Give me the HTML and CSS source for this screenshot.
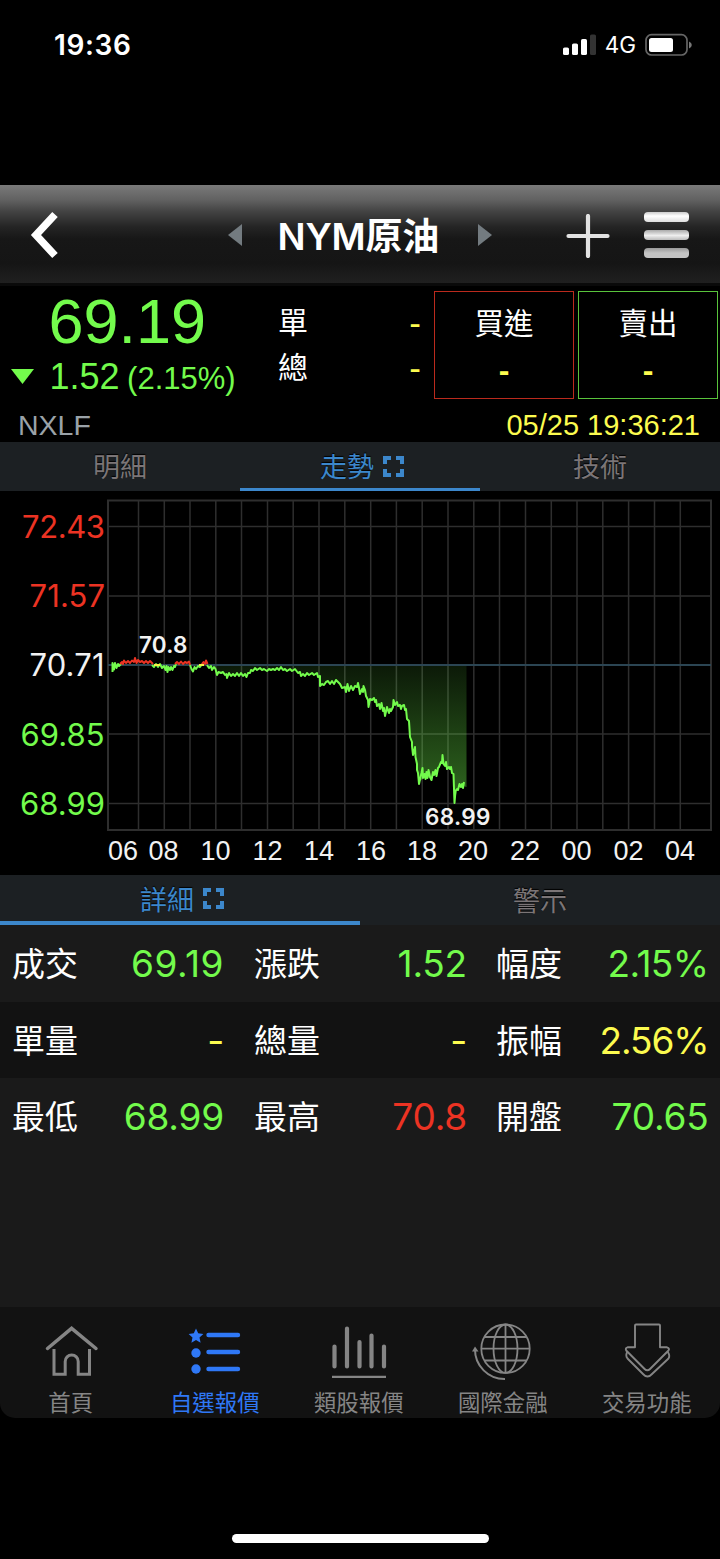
FILE: index.html
```html
<!DOCTYPE html>
<html lang="zh-Hant">
<head>
<meta charset="utf-8">
<title>NYM原油</title>
<link rel="stylesheet" href="styles.css">
</head>
<body>
<div class="status">
  <span class="time">19:36</span>
  <div class="signals">
    <svg width="33" height="22" viewBox="0 0 33 22"><g fill="#fff"><rect x="0" y="13.5" width="6" height="7.5" rx="1.6"/><rect x="9" y="9.5" width="6" height="11.5" rx="1.6"/><rect x="18" y="5" width="6" height="16" rx="1.6"/></g><rect x="27" y="0.5" width="6" height="20.500" rx="1.600" fill="#333"/></svg>
    <span class="net">4G</span>
    <svg width="48" height="24" viewBox="0 0 48 24"><rect x="1" y="1.700" width="41" height="20.300" rx="5.500" fill="none" stroke="#666" stroke-width="1.700"/><rect x="4" y="5" width="24" height="14" rx="2.500" fill="#fff"/><path d="M44 8.500q2.800 1 2.800 3.500t-2.800 3.500z" fill="#777"/></svg>
  </div>
</div>
<header class="header">
  <svg class="back" width="30" height="50" viewBox="0 0 30 50"><path d="M26 4.500 7 25l19 20.500" fill="none" stroke="#fff" stroke-width="7.500"/></svg>
  <div class="title">
    <svg width="14" height="22" viewBox="0 0 14 22"><path d="M14 0v22L0 11z" fill="#737b80"/></svg>
    <h1>NYM原油</h1>
    <svg width="14" height="22" viewBox="0 0 14 22"><path d="M0 0v22l14-11z" fill="#737b80"/></svg>
  </div>
  <svg class="add" width="44" height="44" viewBox="0 0 44 44"><path d="M22 2v40M2.500 22h39" stroke="#e2e2e2" stroke-width="4.200" stroke-linecap="round"/></svg>
  <div class="menu"><i></i><i></i><i></i></div>
</header>
<section class="quote">
  <div class="last">
    <div class="price">69.19</div>
    <div class="change"><svg width="23" height="15" viewBox="0 0 23 15"><path d="M0 0h23L11.500 15z" fill="#73fb4c"/></svg><span class="diff">1.52</span><span class="pct">(2.15%)</span></div>
  </div>
  <dl class="volume">
    <dt>單</dt><dd>-</dd>
    <dt>總</dt><dd>-</dd>
  </dl>
  <div class="side buy"><span>買進</span><b>-</b></div>
  <div class="side sell"><span>賣出</span><b>-</b></div>
  <div class="stamp"><span class="code">NXLF</span><span class="date">05/25 19:36:21</span></div>
</section>
<nav class="tabs three">
  <div class="tab">明細</div>
  <div class="tab on">走勢<svg width="21" height="21" viewBox="0 0 21 21"><path d="M8 2H2v6M13 2h6v6M19 13v6h-6M8 19H2v-6" fill="none" stroke="#3c87cb" stroke-width="4"/></svg></div>
  <div class="tab">技術</div>
</nav>
<svg class="chart" width="720" height="384" viewBox="0 491 720 384">
  <defs>
    <linearGradient id="fall" gradientUnits="userSpaceOnUse" x1="0" y1="665" x2="0" y2="803"><stop offset="0" stop-color="#73fb4c" stop-opacity=".1"/><stop offset="1" stop-color="#73fb4c" stop-opacity=".42"/></linearGradient>
  </defs>
  <g fill="none" stroke="#2e2e2e" stroke-width="1.500">
    <path stroke-width="2" d="M108 500.500H711V830H108z"/>
    <path d="M108 526.500H711M108 596H711M108 734H711M108 803.500H711"/>
    <path d="M138.500 501V830M164.300 501V830M190 501V830M215.800 501V830M241.500 501V830M267.500 501V830M293.200 501V830M319 501V830M344.800 501V830M370.700 501V830M396.400 501V830M422.200 501V830M448 501V830M473.800 501V830M499.500 501V830M525.500 501V830M551.300 501V830M577 501V830M602.800 501V830M628.600 501V830M654.500 501V830M680.300 501V830"/>
  </g>
  <path fill="url(#fall)" d="M208 665L216 671 227 676 247 675 254 669 280 668 295 670 300 674 317 674 320 685 337 680 341 687 346 690 358 686 361 692 364 691 368 703 375 699 385 714 392 710 394 703 404 706 408 720 412 745 415 752 419 782 425 777 431 778 439 766 443 762 447 767 451 768 453 774 454 803 457 791 460 785 466.500 787V665z"/>
  <path d="M108 665H711" stroke="#2b4553" stroke-width="2"/>
  <g fill="none" stroke-width="2" stroke-linejoin="round">
    <g stroke="#73fb4c">
      <path d="M112.500 672V663L114 669.500 115 663 116.500 668 118 664 119 666 121 664"/>
      <path d="M152 665L154 667 156 664 158 667 160 664 162 668 164 666 165.500 670 166.500 666 167.500 672 168.500 667 170 670 171 667 172.500 670 174 666 175 667 176 664"/>
      <path d="M190 665L191.500 669 193 671.500 194.500 667 196 669 198 666 200 667 202 664"/>
      <path d="M207 665L209 668 211 666 212 670 214 667 215.500 669 217 675 218.500 672 221 673 223 672 225 675 226.500 674 227 678 229 673 231 676 233 674 235 676 237 673 239 676 241 673 243 676 245 674 246.500 677 248 673 250 673 251 670 253 671 255 668 257 670 260 668 262 670 264 669 267 671 269 669 271 670 273 669 275 670 277 668 279 670 281 667 283 670 285 669 287 671 290 669 292 671 295 669 298 673 300 672 301 676 303 674 305 676 307 673 309 675 312 673 314 675 317 673 318 677 320 676 320 686 322 684 324 685 326 682 328 681 330 684 332 681 334 684 336 680 338 682 340 684 342 688 345 687 346 692 347.500 684 349 691 351 686 353 690 355 686 357 687 358 683 359 688 360 694 362 689 363 692 363.500 686 365 690 366 696 368 700 368.500 707 370 699 372 700 374 698 375 702 376 700 377 706 379 704 380 709 381.500 703 383 711 384 708 385 716 387 707 389 713 390 709 391 711 393 707 393.500 700 395 705 397 702 398 706 400 705 401 709 402 706 404 705 405 710 406 709 407 719 409 721 410 737 412 742 412 746 413 755 415 747 415.500 757 417 764 417 770 418 773 419 784 420.500 777 421.500 773 422.500 768 423 778 424.500 774 425.500 779 426.500 772 427.500 778 428.500 770 430 777 431.500 780 433 772 434 775 435.500 770 436.500 776 438 768 439 767 441 762 442 763 442.500 755 443.500 764 445 766 446 762 447 769 449 767 450 769 451 767 452 773 453.500 774 454.500 803 455.500 791 457 789 458 790 459.500 784 461 787 462 784 463 788 464 782"/>
    </g>
    <g stroke="#ec3323">
      <path d="M120 664L122 662 123 664 124 660.500 126 663 128 661 130 663 132 660.500 134 662 135 658 136.500 663 138 660 140 662 142 661 144 663 146 661 148 663 150 661 153 664"/>
      <path d="M175 664L177 662 179 664 181 661.500 183 664 185 662 187 663 189 661.500 190 665"/>
      <path d="M202 664L203.500 662 205 664 206 660.500 207.500 664"/>
    </g>
    <path stroke="#f6ef45" d="M154 665H160M199 665H204"/>
  </g>
  <g class="ylab">
    <text x="22" y="538" textLength="83" class="up">72.43</text>
    <text x="29.500" y="607" textLength="75.500" class="up">71.57</text>
    <text x="29.500" y="676" textLength="75">70.71</text>
    <text x="20.500" y="745.500" textLength="84" class="down">69.85</text>
    <text x="20" y="814.500" textLength="85" class="down">68.99</text>
  </g>
  <g class="mark"><text x="139" y="652.500" textLength="48.500">70.8</text><text x="425" y="825" textLength="65.500">68.99</text></g>
  <g class="xlab"><text x="123" y="860">06</text><text x="163.500" y="860">08</text><text x="215.500" y="860">10</text><text x="267.500" y="860">12</text><text x="319" y="860">14</text><text x="371" y="860">16</text><text x="422" y="860">18</text><text x="473" y="860">20</text><text x="525" y="860">22</text><text x="576.500" y="860">00</text><text x="628.500" y="860">02</text><text x="680" y="860">04</text></g>
</svg>
<nav class="tabs two">
  <div class="tab on">詳細<svg width="21" height="21" viewBox="0 0 21 21"><path d="M8 2H2v6M13 2h6v6M19 13v6h-6M8 19H2v-6" fill="none" stroke="#3c87cb" stroke-width="4"/></svg></div>
  <div class="tab">警示</div>
</nav>
<main class="detail">
  <div class="row"><label>成交</label><span class="down deal">69.19</span><label>漲跌</label><span class="down">1.52</span><label>幅度</label><span class="down rate">2.15%</span></div>
  <div class="row"><label>單量</label><span class="flat">-</span><label>總量</label><span class="flat">-</span><label>振幅</label><span class="flat range">2.56%</span></div>
  <div class="row"><label>最低</label><span class="down">68.99</span><label>最高</label><span class="up">70.8</span><label>開盤</label><span class="down">70.65</span></div>
</main>
<footer class="dock">
  <div class="item"><svg width="64" height="64" viewBox="0 0 64 64"><path stroke-width="3.500" stroke-linecap="round" d="M7.500 28.500 31.600 8.300 56 28.500"/><path stroke-width="3" d="M14 29v25.200h11.200V41.500a6.500 6.500 0 0 1 13 0v12.700h11.300V29"/></svg><span>首頁</span></div>
  <div class="item on"><svg width="64" height="64" viewBox="0 0 64 64"><path fill="#2f78f6" stroke="none" d="M12 8.500l2.200 4.800 5.200.6-3.900 3.500 1.100 5.300-4.600-2.700-4.600 2.700 1.100-5.300-3.900-3.500 5.200-.6z"/><circle cx="12" cy="33" r="4.700" fill="#2f78f6" stroke="none"/><circle cx="12" cy="49" r="4.700" fill="#2f78f6" stroke="none"/><path stroke-width="4.400" stroke-linecap="round" d="M24.500 15H54M24.500 32H54M24.500 49H54"/></svg><span>自選報價</span></div>
  <div class="item"><svg width="64" height="64" viewBox="0 0 64 64"><path stroke-width="4.200" stroke-linecap="round" d="M6.500 26.500V46.500M19 8.500V46.500M31.500 22V46.500M43.500 15.500V46.500M56 26.500V46.500"/><path stroke-width="2.200" d="M4 56.800H58"/></svg><span>類股報價</span></div>
  <div class="item"><svg width="64" height="64" viewBox="0 0 64 64"><g stroke-width="1.800"><circle cx="33.500" cy="28.700" r="24.200"/><ellipse cx="33.500" cy="28.700" rx="12" ry="24.200"/><path d="M33.500 4.500V53M9.300 28.700H57.700M13 17H54M13 40.500H54"/></g><path stroke-width="2" d="M3 29a29.500 29.500 0 0 0 30 30"/><path fill="#858585" stroke="none" d="M0 31.500 3 26.500 6.500 31.500z"/></svg><span>國際金融</span></div>
  <div class="item"><svg width="64" height="64" viewBox="0 0 64 64"><g stroke-width="1.900" stroke-linejoin="round"><path d="M19 5.500q0-1 1-1H43q1 0 1 1V27.300h7q3 1 1.500 3.200L34 49q-2.700 2.700-5.400 0L10.200 30.500Q9 28 11.500 27.300H19z"/><path d="M11.500 31.500q-2.500 4 0 7L27 54q4.500 5 9 0L52.500 38.500q2-3-1-7"/></g></svg><span>交易功能</span></div>
</footer>
<div class="home"></div>
</body>
</html>
```
FILE: styles.css
```css
* { box-sizing: border-box; }
body { margin: 0; width: 720px; height: 1559px; background: #000; color: #fff; font-family: Inter, "Noto Sans CJK TC", sans-serif; overflow: hidden; }
svg { display: block; flex: none; }
.up { color: #ec3323; fill: #ec3323; }
.down { color: #73fb4c; fill: #73fb4c; }
.flat { color: #fcfb4f; }

.status { height: 185px; padding: 31px 27px 0 54px; display: flex; justify-content: space-between; align-items: flex-start; }
.time { font-size: 28px; line-height: 28px; font-weight: 600; letter-spacing: .6px; }
.signals { display: flex; align-items: center; height: 28px; }
.net { font-size: 22.5px; line-height: 28px; margin: 0 9px 0 9px; }

.header { height: 101px; border-bottom: 3px solid #0a0a0a; padding: 0 31px 0 29px; display: flex; align-items: center; background: linear-gradient(#7a7a7a 0, #616161 15px, #444 26px, #242424 42px, #171717 54px, #151515 78px, #202020 98px); }
.back { margin-top: 2px; }
.title { flex: 1; display: flex; justify-content: center; align-items: center; gap: 36px; padding-left: 166px; }
.title svg { margin-top: 2px; }
h1 { margin: 6px 0 0; width: 164px; white-space: nowrap; font-size: 37px; line-height: 50px; font-weight: 600; letter-spacing: -.2px; }
.add { margin: 3px 34px 0 72px; }
.menu { display: grid; gap: 8px; margin-top: 2px; }
.menu i { width: 45px; height: 10px; border-radius: 4px; background: linear-gradient(#aaa, #eee 55%, #bbb); }
.menu i:first-child { background: linear-gradient(#ccc, #fff 40%, #ddd); }
.menu i:last-child { background: linear-gradient(#999, #c4c4c4 50%, #c4c4c4); }

.quote { height: 156px; padding-top: 5px; display: grid; grid-template-columns: 278px 143px 13px 140px 4px 140px; grid-template-rows: 108px 43px; font-family: "Liberation Sans", "Noto Sans CJK TC", sans-serif; }
.last { color: #73fb4c; }
.price { font-size: 63px; line-height: 60px; padding-left: 48.5px; }
.change { display: flex; align-items: baseline; padding-left: 11px; line-height: 52px; }
.change svg { margin-right: 15.5px; position: relative; top: -5px; }
.diff { font-size: 36px; }
.pct { font-size: 31px; margin-left: 7.5px; }
.volume { margin: 9px 0 0; display: grid; grid-template-columns: 1fr auto; grid-auto-rows: 45px; line-height: 45px; font-size: 30px; }
.volume dd { margin: 0; color: #fcfb4f; font-size: 35px; }
.side { display: grid; grid-template-rows: 46px 46px; padding-top: 9px; text-align: center; line-height: 46px; font-size: 29.500px; }
.side b { color: #fcfb4f; font-size: 32px; }
.buy { grid-column: 4; border: 1px solid #bb2a1d; }
.sell { grid-column: 6; border: 1px solid #59c43c; }
.stamp { grid-column: 1 / -1; display: flex; justify-content: space-between; padding: 5px 18px 0 18px; line-height: 43px; }
.code { font-size: 28.5px; color: #9aa2a8; }
.date { font-size: 29px; color: #fcfb4f; }

.tabs { display: grid; background: #1c2023; color: #7b7577; font-size: 27px; line-height: 41px; text-shadow: 0 -1.500px 1px #000; }
.three { grid-template-columns: repeat(3, 1fr); height: 49px; }
.two { grid-template-columns: repeat(2, 1fr); height: 50px; }
.tab { display: flex; justify-content: center; align-items: center; gap: 9px; padding: 5px 0 3px; }
.on { color: #3c87cb; }
.tab.on { padding: 5px 0 0 4px; border-bottom: 3px solid #3c87cb; }
.two .tab.on { padding-top: 4px; border-bottom-width: 4px; }
.tab svg { margin-top: -3px; }

.ylab { font-size: 31px; fill: #f2f2f2; }
.mark { font-size: 22.500px; font-weight: 600; fill: #f2f2f2; }
.xlab { font-family: "Liberation Sans", sans-serif; font-size: 27px; fill: #f2f2f2; text-anchor: middle; }

.detail { height: 382px; background: #1a1a1a; }
.row { display: grid; grid-template-columns: 76px 136px 106px 137px 105px 136.5px; height: 76.500px; align-items: center; padding-left: 12px; }
.row:nth-child(2) { background: #121212; }
.row label { font-size: 33px; line-height: 76px; padding-top: 1px; }
.row span { font-size: 37px; line-height: 76px; padding-top: 1px; text-align: right; letter-spacing: -.2px; }
.row .deal { letter-spacing: .5px; }
.row .rate { letter-spacing: -.6px; }
.row .range { letter-spacing: -1.1px; }
.row label:nth-of-type(n+2) { padding-left: 30px; }
.row label:nth-of-type(3) { padding-left: 29px; }

.dock { height: 111px; background: #121212; border-radius: 0 0 15px 15px; display: grid; grid-template-columns: repeat(5, 1fr); padding-top: 13px; }
.item { display: flex; flex-direction: column; align-items: center; color: #858585; font-size: 22.400px; line-height: 36px; white-space: nowrap; }
.item span { padding: 1px 2.5px 0 0; }
.item svg { fill: none; stroke: #858585; }
.item.on { color: #2f78f6; }
.item.on svg { stroke: #2f78f6; }
.home { margin: 116px 0 0 232px; width: 257px; height: 9px; border-radius: 5px; background: #fff; }
```
